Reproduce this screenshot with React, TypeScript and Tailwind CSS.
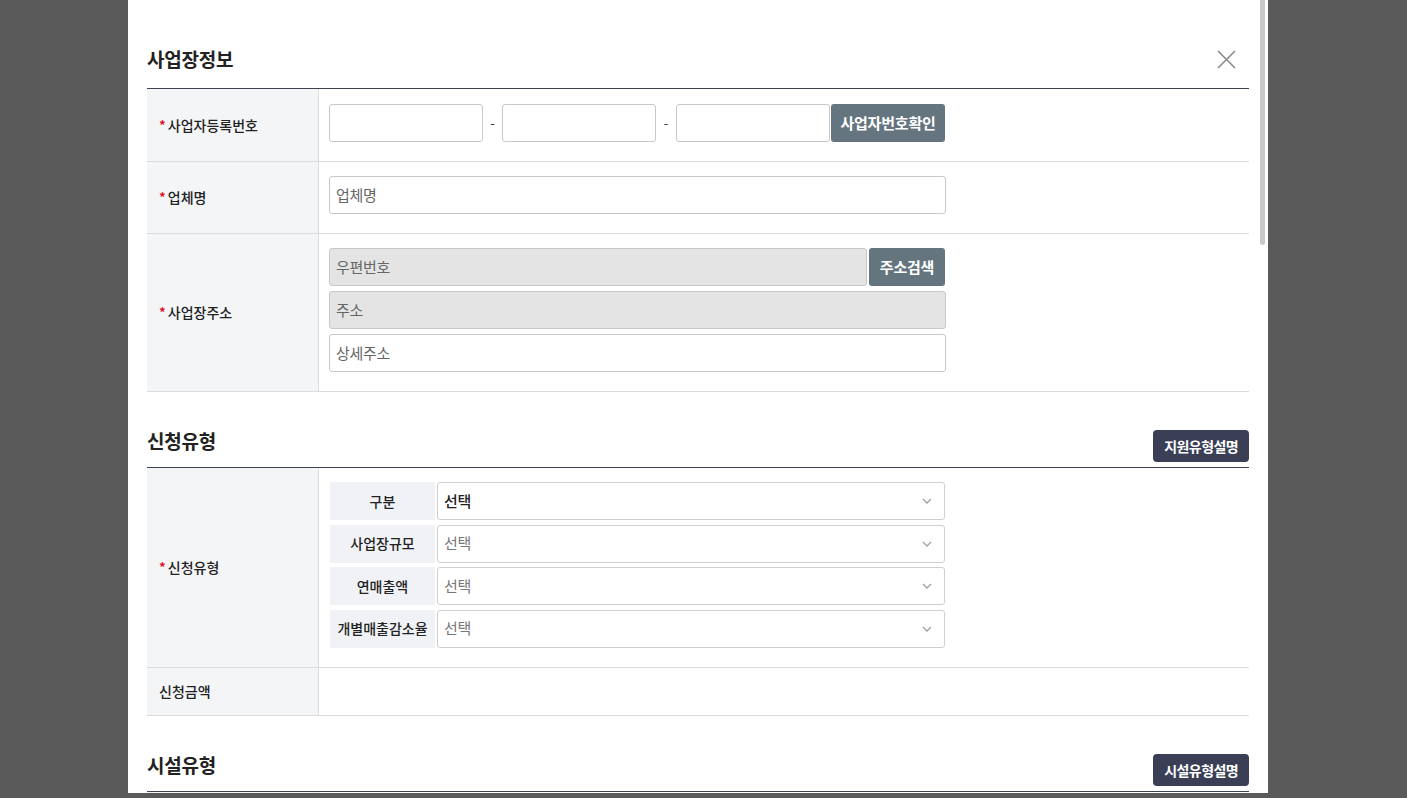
import React from "react";

const font = { fontFamily: '"Noto Sans CJK KR", "Noto Sans", sans-serif' };

function Req() {
  return <span className="text-[#e60012] mr-[2px]">*</span>;
}

function Label({ children, req = true }: { children: React.ReactNode; req?: boolean }) {
  return (
    <div className="w-[172px] shrink-0 bg-[#f4f5f7] border-r border-[#dcdcdc] flex items-center pl-[12px] text-[14px] font-medium text-[#222] tracking-[0px]">
      {req && <Req />}
      {children}
    </div>
  );
}

function Input({ w, placeholder, disabled }: { w: string; placeholder?: string; disabled?: boolean }) {
  return (
    <div
      className={`${w} h-[38px] rounded-[3px] border border-[#c8c8c8] flex items-center pl-[6px] text-[15px] text-[#666] tracking-[-0.3px] ${
        disabled ? "bg-[#e4e4e4]" : "bg-white"
      }`}
    >
      {placeholder}
    </div>
  );
}

function Chevron() {
  return (
    <svg width="10" height="6" viewBox="0 0 10 6" className="mr-[12px]">
      <path d="M1 1 L5 5 L9 1" fill="none" stroke="#a0a0a0" strokeWidth="1.3" />
    </svg>
  );
}

function SelectRow({ label, dark }: { label: string; dark?: boolean }) {
  return (
    <div className="flex gap-[2px] h-[38px]">
      <div className="w-[105px] bg-[#f0f2f6] flex items-center justify-center text-[14px] font-medium text-[#222] tracking-[0px]">
        {label}
      </div>
      <div className="w-[508px] rounded-[3px] border border-[#cfcfcf] bg-white flex items-center justify-between pl-[6px]">
        <span className={`text-[15px] tracking-[-0.3px] ${dark ? "text-[#222] font-medium" : "text-[#777]"}`}>선택</span>
        <Chevron />
      </div>
    </div>
  );
}

function SectionHead({ title, button }: { title: string; button?: string }) {
  return (
    <div className="h-[76px] flex items-end justify-between border-b border-[#3c4250]">
      <div className="text-[19px] font-bold text-[#222] tracking-[-0.2px] leading-none mb-[17px]">{title}</div>
      {button && (
        <div className="h-[32px] px-[11px] rounded-[4px] bg-[#3a3f56] text-white text-[14px] font-bold tracking-[-0.6px] flex items-center mb-[5px]">
          {button}
        </div>
      )}
    </div>
  );
}

export default function App() {
  return (
    <div className="w-[1407px] h-[798px] bg-[#5a5a5a] overflow-hidden" style={font}>
      <div className="relative ml-[128px] w-[1140px] h-[793px] bg-white overflow-hidden">
        {/* scrollbar */}
        <div className="absolute right-[3px] top-0 w-[5px] h-[245px] rounded-b-[3px] bg-[#c9c9c9]" />
        {/* close */}
        <svg className="absolute left-[1089px] top-[50px]" width="19" height="19" viewBox="0 0 19 19">
          <path d="M1 1 L18 18 M18 1 L1 18" stroke="#8a8a8a" strokeWidth="1.6" />
        </svg>

        <div className="pl-[19px] w-[1121px] flex flex-col">
          {/* Section 1 */}
          <div className="h-[89px] flex items-end border-b border-[#3c4250]">
            <div className="text-[19px] font-bold text-[#222] tracking-[-0.2px] leading-none mb-[20px]">사업장정보</div>
          </div>

          <div className="flex h-[73px] border-b border-[#dcdcdc]">
            <Label>사업자등록번호</Label>
            <div className="flex-1 pl-[10px] pt-[15px] flex items-start">
              <Input w="w-[154px]" />
              <div className="w-[19px] h-[38px] flex items-center justify-center text-[13px] text-[#333]">-</div>
              <Input w="w-[154px]" />
              <div className="w-[20px] h-[38px] flex items-center justify-center text-[13px] text-[#333]">-</div>
              <Input w="w-[154px]" />
              <div className="ml-[1px] h-[38px] w-[114px] rounded-[3px] bg-[#65757f] text-white text-[15px] font-bold tracking-[-0.2px] flex items-center justify-center">
                사업자번호확인
              </div>
            </div>
          </div>

          <div className="flex h-[72px] border-b border-[#dcdcdc]">
            <Label>업체명</Label>
            <div className="flex-1 pl-[10px] pt-[14px]">
              <Input w="w-[617px]" placeholder="업체명" />
            </div>
          </div>

          <div className="flex h-[158px] border-b border-[#dcdcdc]">
            <Label>사업장주소</Label>
            <div className="flex-1 pl-[10px] pt-[14px] flex flex-col gap-[5px]">
              <div className="flex gap-[2px]">
                <Input w="w-[538px]" placeholder="우편번호" disabled />
                <div className="h-[38px] w-[76px] rounded-[3px] bg-[#65757f] text-white text-[15px] font-bold tracking-[-0.2px] flex items-center justify-center">
                  주소검색
                </div>
              </div>
              <Input w="w-[617px]" placeholder="주소" disabled />
              <Input w="w-[617px]" placeholder="상세주소" />
            </div>
          </div>

          {/* Section 2 */}
          <SectionHead title="신청유형" button="지원유형설명" />
          <div className="flex h-[200px] border-b border-[#dcdcdc]">
            <Label>신청유형</Label>
            <div className="flex-1 pl-[11px] pt-[14px] flex flex-col gap-[4.5px]">
              <SelectRow label="구분" dark />
              <SelectRow label="사업장규모" />
              <SelectRow label="연매출액" />
              <SelectRow label="개별매출감소율" />
            </div>
          </div>
          <div className="flex h-[48px] border-b border-[#dcdcdc]">
            <Label req={false}>신청금액</Label>
            <div className="flex-1" />
          </div>

          {/* Section 3 */}
          <SectionHead title="시설유형" button="시설유형설명" />
          <div className="flex h-[40px]">
            <div className="w-[172px] bg-[#f4f5f7] border-r border-[#dcdcdc]" />
          </div>
        </div>
      </div>
    </div>
  );
}
